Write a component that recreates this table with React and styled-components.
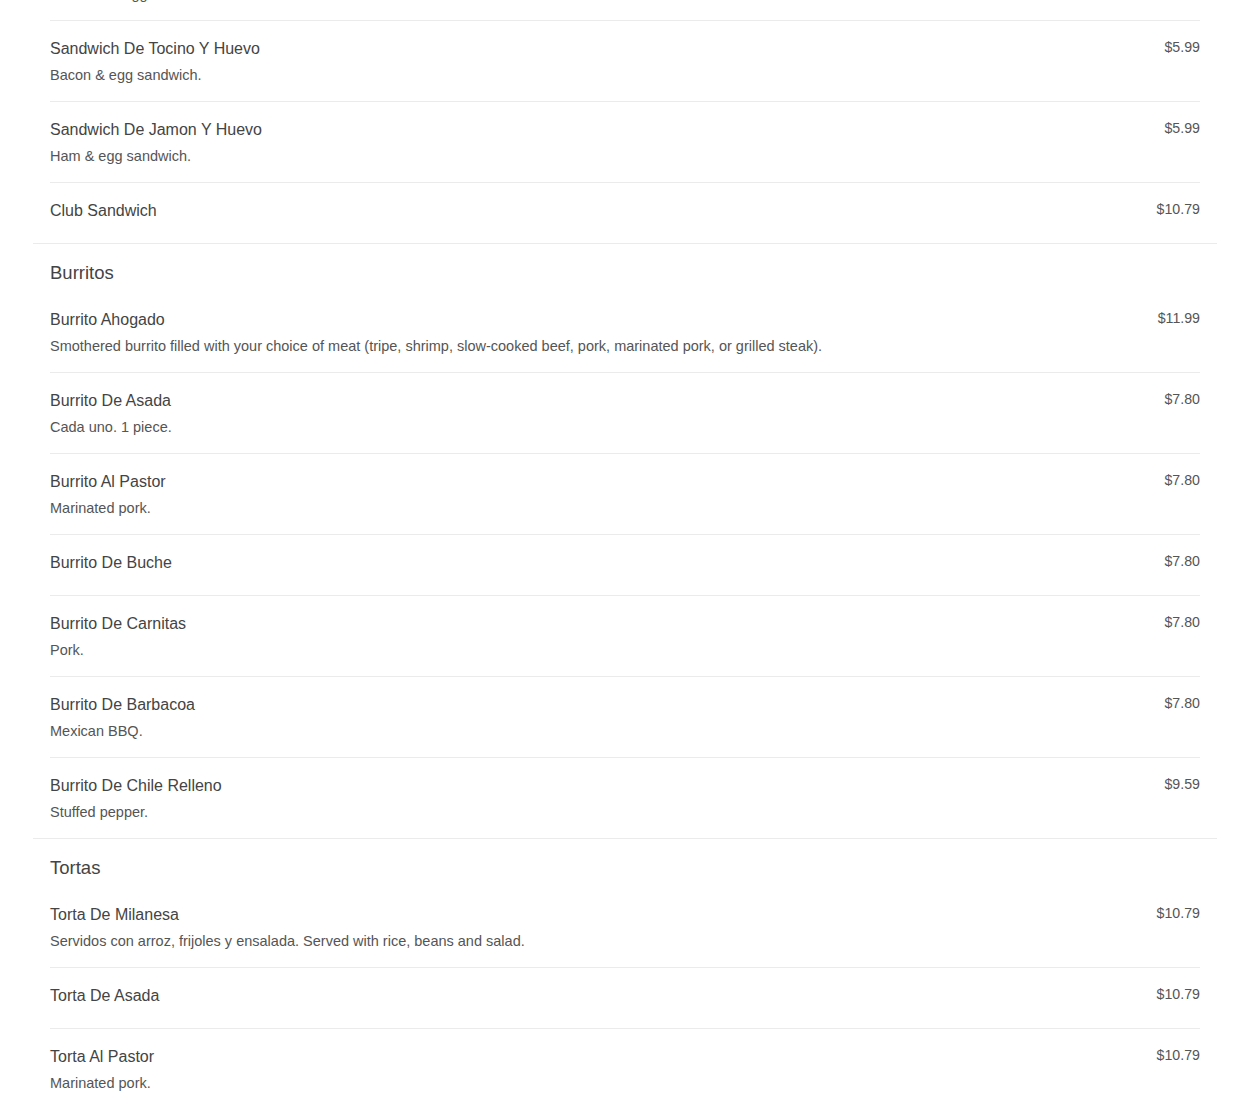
import React from "react";
import styled, { createGlobalStyle } from "styled-components";

const GlobalStyle = createGlobalStyle`
  html, body {
    margin: 0;
    padding: 0;
    background: #ffffff;
    font-family: "Liberation Sans", Arial, sans-serif;
  }
`;

const menu = [
  {
    title: "Sandwiches",
    items: [
      { name: "Sandwich De Huevo", desc: "Scrambled egg sandwich.", price: "$5.99" },
      { name: "Sandwich De Tocino Y Huevo", desc: "Bacon & egg sandwich.", price: "$5.99" },
      { name: "Sandwich De Jamon Y Huevo", desc: "Ham & egg sandwich.", price: "$5.99" },
      { name: "Club Sandwich", price: "$10.79" },
    ],
  },
  {
    title: "Burritos",
    items: [
      {
        name: "Burrito Ahogado",
        desc: "Smothered burrito filled with your choice of meat (tripe, shrimp, slow-cooked beef, pork, marinated pork, or grilled steak).",
        price: "$11.99",
      },
      { name: "Burrito De Asada", desc: "Cada uno. 1 piece.", price: "$7.80" },
      { name: "Burrito Al Pastor", desc: "Marinated pork.", price: "$7.80" },
      { name: "Burrito De Buche", price: "$7.80" },
      { name: "Burrito De Carnitas", desc: "Pork.", price: "$7.80" },
      { name: "Burrito De Barbacoa", desc: "Mexican BBQ.", price: "$7.80" },
      { name: "Burrito De Chile Relleno", desc: "Stuffed pepper.", price: "$9.59" },
    ],
  },
  {
    title: "Tortas",
    items: [
      {
        name: "Torta De Milanesa",
        desc: "Servidos con arroz, frijoles y ensalada. Served with rice, beans and salad.",
        price: "$10.79",
      },
      { name: "Torta De Asada", price: "$10.79" },
      { name: "Torta Al Pastor", desc: "Marinated pork.", price: "$10.79" },
      { name: "Torta De Carnitas", desc: "Pork.", price: "$10.79" },
    ],
  },
];

// page is shown scrolled part way into the menu
const Page = styled.div`
  margin: -108px 33px 0 33px;
`;

const Section = styled.section`
  padding: 17px 17px 0 17px;
  border-bottom: 1px solid #ebebeb;
`;

const SectionTitle = styled.h2`
  margin: 0 0 7px 0;
  font-size: 18.5px;
  line-height: 24px;
  font-weight: 400;
  color: #444444;
`;

const ItemList = styled.ul`
  list-style: none;
  margin: 0;
  padding: 0;
`;

const Item = styled.li`
  display: flex;
  justify-content: space-between;
  align-items: flex-start;
  gap: 24px;
  padding: 18px 0 22px 0;
  border-bottom: 1px solid #ebebeb;

  &:last-child {
    border-bottom: none;
  }
`;

const ItemText = styled.div`
  display: flex;
  flex-direction: column;
  min-width: 0;
`;

const ItemName = styled.div`
  font-size: 16px;
  line-height: 20px;
  color: #444444;
`;

const ItemDesc = styled.div`
  margin: 6px 0 -6px 0;
  font-size: 14.5px;
  line-height: 20px;
  color: #555555;
`;

const Price = styled.div`
  flex: 0 0 auto;
  font-size: 14.2px;
  line-height: 16px;
  color: #555555;
`;

export default function App() {
  return (
    <>
      <GlobalStyle />
      <Page>
        {menu.map((section) => (
          <Section key={section.title}>
            <SectionTitle>{section.title}</SectionTitle>
            <ItemList>
              {section.items.map((item) => (
                <Item key={item.name}>
                  <ItemText>
                    <ItemName>{item.name}</ItemName>
                    {item.desc && <ItemDesc>{item.desc}</ItemDesc>}
                  </ItemText>
                  <Price>{item.price}</Price>
                </Item>
              ))}
            </ItemList>
          </Section>
        ))}
      </Page>
    </>
  );
}
